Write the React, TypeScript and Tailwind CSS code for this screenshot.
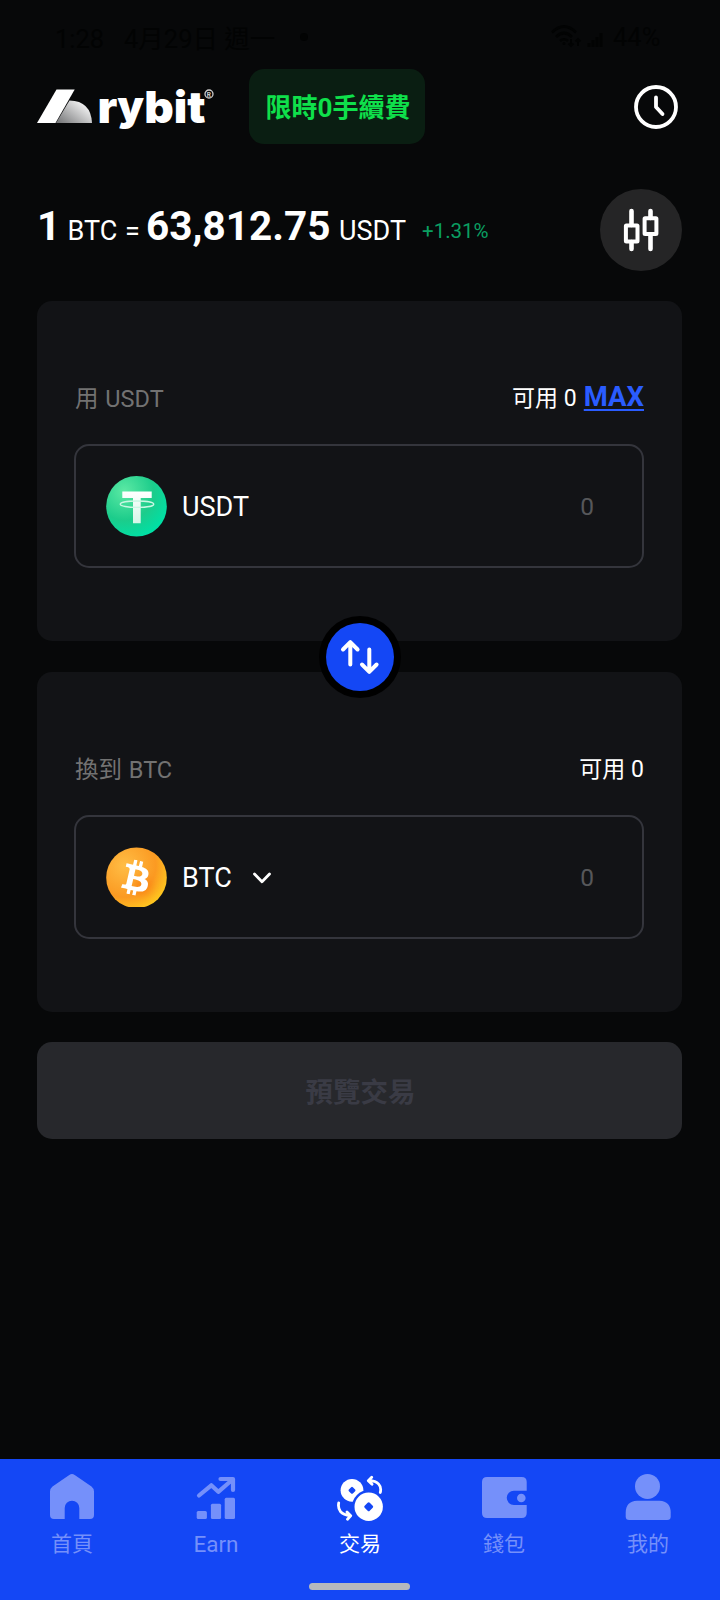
import type { ReactNode } from 'react';
import { FaBtc } from 'react-icons/fa';
import clsx from 'clsx';

interface NavItemProps {
  label: ReactNode;
  active?: boolean;
  children: ReactNode;
}

interface AssetCardProps {
  label: string;
  available: ReactNode;
  icon: ReactNode;
  symbol: ReactNode;
}

function StatusBar() {
  return (
    <div className="flex h-[69px] items-start pt-[23px] pl-[55px] pr-[57px] text-[25.5px] leading-[32px] text-[#020303]">
      <span className="w-[69px]">1:28</span>
      <span className="w-[176px] whitespace-nowrap">4月29日 週一</span>
      <span className="mt-[10px] size-2 rounded-full bg-[#020303]" />
      <div className="ml-auto flex items-start">
        <svg width="58" height="28" viewBox="0 0 58 28" fill="none" stroke="#020303" strokeWidth="2.6">
          <path d="M2 9.5Q14-2.500 26 9.500M6 14Q14 6 22 14M10 18Q14 14.500 18 18" />
          <circle cx="14" cy="20.500" r="1.500" fill="#020303" stroke="none" />
          <path d="M21 16v7M18.500 20.500l2.500 2.500 2.500-2.500M28 23v-7M25.500 18.500L28 16l2.500 2.500" strokeWidth="1.800" />
          <path d="M39 24v-4M43 24v-7M47 24V14M51 24V10" strokeWidth="3" />
        </svg>
        <span className="ml-[5px] -mt-0.5 w-[50px] text-[25.5px]">44%</span>
      </div>
    </div>
  );
}

function Logo() {
  return (
    <svg className="overflow-visible" width="180" height="50" viewBox="0 0 180 50">
      <defs>
        <linearGradient id="logoDome" x1="0" y1="0.9" x2="0.85" y2="0.2">
          <stop offset="0" stopColor="#77787a" />
          <stop offset="1" stopColor="#f4f4f4" />
        </linearGradient>
      </defs>
      <path d="M19 34L32.500 11.500Q54 12 55 34Z" fill="url(#logoDome)" />
      <path d="M0 34L19.500 0.500H37.700L18.500 34Z" fill="#fff" />
      <text
        x="60.500"
        y="33.700"
        textLength="108"
        lengthAdjust="spacingAndGlyphs"
        className="fill-white font-[Inter] text-[44.5px] font-black"
      >
        r
        <tspan dy="-3" className="text-[41px]">
          y
        </tspan>
        <tspan dy="3">bit</tspan>
      </text>
      <circle cx="172" cy="5" r="4" fill="none" stroke="#ccc" strokeWidth="1.300" />
      <text x="169.800" y="7.500" className="fill-[#ccc] text-[6.500px] font-bold">
        R
      </text>
    </svg>
  );
}

function Header() {
  return (
    <header className="flex h-[75px] items-center pl-[37px] pr-[38px]">
      <div className="mt-[15px] w-[212px]">
        <Logo />
      </div>
      <div className="flex h-[75px] w-44 items-center justify-center rounded-[15px] bg-[#0a1e12] pt-0.5 pl-0.5 text-[26px] leading-none font-bold text-[#0fe04b]">
        限時0手續費
      </div>
      <svg
        className="mr-[3px] ml-auto"
        width="46"
        height="46"
        viewBox="0 0 46 46"
        fill="none"
        stroke="#fff"
        strokeWidth="3.800"
        strokeLinecap="round"
        strokeLinejoin="round"
      >
        <circle cx="23" cy="23" r="20" />
        <path d="M23 13.500V23L29.500 30" />
      </svg>
    </header>
  );
}

function RateRow() {
  return (
    <div className="mt-[44px] flex h-[82px] items-center justify-between pl-[37px] pr-[38px]">
      <div className="flex items-baseline text-[27px] leading-[48px] whitespace-nowrap text-white">
        <span className="w-[30.5px] text-[41px] font-bold">1</span>
        <span className="w-[57.5px]">BTC</span>
        <span className="w-[21px]">=</span>
        <span className="w-[193px] text-[40.5px] font-bold">63,812.75</span>
        <span className="w-[83px]">USDT</span>
        <span className="-translate-y-0.5 text-[20.5px] text-[#0a9f62]">+1.31%</span>
      </div>
      <div className="mt-0.5 size-[82px] rounded-full bg-[#252526]">
        <svg width="82" height="82" viewBox="0 0 82 82" fill="none" stroke="#fff" strokeWidth="4">
          <rect x="25.900" y="36.600" width="11.600" height="15.800" rx="0.500" />
          <rect x="44.600" y="29.200" width="11.800" height="15.800" rx="0.500" />
          <path d="M31.500 22v14M31.500 53v7M50.500 22v7M50.500 46v14" strokeLinecap="round" strokeWidth="4.600" />
        </svg>
      </div>
    </div>
  );
}

function TetherIcon() {
  return (
    <svg width="61" height="61" viewBox="0 0 61 61">
      <defs>
        <radialGradient id="tether" cx="0.3" cy="0.25" r="0.8">
          <stop offset="0" stopColor="#5ce9a4" />
          <stop offset="0.6" stopColor="#1ccc8b" />
          <stop offset="1" stopColor="#00e0a5" />
        </radialGradient>
        <linearGradient id="tetherMark" x1="0" y1="0" x2="0" y2="1">
          <stop offset="0" stopColor="#fff" />
          <stop offset="1" stopColor="#d5f6e8" />
        </linearGradient>
      </defs>
      <circle cx="30.500" cy="30.300" r="30.300" fill="url(#tether)" />
      <path d="M16.300 15.500h29.400v6.500H34.700v25.300h-7.700V22H16.300Z" fill="url(#tetherMark)" />
      <ellipse cx="31" cy="28.200" rx="16.700" ry="3.200" fill="none" stroke="#c9f7e3" strokeWidth="1.400" />
    </svg>
  );
}

function BitcoinIcon() {
  return (
    <svg width="61" height="60" viewBox="0 0 61 60">
      <defs>
        <radialGradient id="btc" cx="0.3" cy="0.3" r="0.8">
          <stop offset="0" stopColor="#ffbd45" />
          <stop offset="0.65" stopColor="#fb9a22" />
          <stop offset="1" stopColor="#ffcb1f" />
        </radialGradient>
      </defs>
      <circle cx="30.500" cy="30.700" r="30.300" fill="url(#btc)" />
      <circle cx="37" cy="39" r="9" fill="#f97f10" className="opacity-70 blur-[4px]" />
      <g transform="rotate(13 30.500 30.500)">
        <FaBtc x="13" y="13.500" size={35} color="#fff" />
      </g>
    </svg>
  );
}

function AssetCard({ label, available, icon, symbol }: AssetCardProps) {
  return (
    <section className="h-[340px] rounded-[15px] bg-[#121316] pt-[80px] pr-[38px] pl-[37px]">
      <div className="flex h-9 items-center justify-between text-[23.5px] leading-9">
        <span className="pl-px text-[#727272] [word-spacing:1px]">{label}</span>
        <div className="flex items-center text-[23px] text-white">{available}</div>
      </div>
      <div className="mt-[27px] flex h-[124px] items-center rounded-[15px] border-2 border-[#34353c] pl-[30px] pr-[48px]">
        {icon}
        <div className="mt-px ml-[15px] flex items-center text-[27px] leading-9 text-white">{symbol}</div>
        <span className="mt-0.5 ml-auto text-[24.5px] leading-9 text-[#56575a]">0</span>
      </div>
    </section>
  );
}

function SwapButton() {
  return (
    <button className="absolute top-[315px] left-[282px] size-[82px] rounded-full bg-black p-[7px]">
      <svg
        className="rounded-full bg-[#1447f5]"
        width="68"
        height="68"
        viewBox="-34 -34 68 68"
        fill="none"
        stroke="#fff"
        strokeWidth="4"
        strokeLinecap="round"
        strokeLinejoin="round"
      >
        <path d="M-9.700 7.500V-14.500M-17-7.500l7.300-7.300 7.300 7.300" />
        <path d="M9.300-7.500V14.500M2 7.500l7.300 7.300 7.300-7.300" />
      </svg>
    </button>
  );
}

function NavItem({ label, active = false, children }: NavItemProps) {
  return (
    <div
      className={clsx(
        'flex w-36 flex-col items-center pt-[14px] text-[21px] leading-[28px]',
        active ? 'text-white' : 'text-[#7590fa]',
      )}
    >
      <svg width="48" height="48" viewBox="0 0 48 48" fill="currentColor">
        {children}
      </svg>
      <span className="mt-[9px]">{label}</span>
    </div>
  );
}

function BottomNav() {
  return (
    <nav className="flex h-[141px] flex-col bg-[#1447f5]">
      <div className="flex">
        <NavItem label="首頁">
          <path d="M21.300 1.900Q24 0 26.700 1.900L43.500 13.500Q46 15.500 46 18.500V42Q46 46 42 46H31.300V35A7.300 7.300 0 0 0 16.700 35V46H6Q2 46 2 42V18.500Q2 15.500 4.500 13.500Z" />
        </NavItem>
        <NavItem label={<span className="text-[22.5px]">Earn</span>}>
          <rect x="4.700" y="38" width="10.200" height="8" rx="1.500" />
          <rect x="18.900" y="30.700" width="10.200" height="15.300" rx="1.500" />
          <rect x="32.700" y="24.700" width="10.300" height="21.300" rx="1.500" />
          <path
            d="M7 22.500L19.300 12.300L26.300 18.800L40 7M28.500 6H41V17"
            fill="none"
            stroke="currentColor"
            strokeWidth="4.200"
            strokeLinecap="round"
            strokeLinejoin="round"
          />
          <path d="M34 6h7v7Z" />
        </NavItem>
        <NavItem label="交易" active>
          <circle cx="16" cy="17.300" r="11.400" />
          <rect x="13.200" y="14.500" width="5.600" height="5.600" rx="1.200" transform="rotate(45 16 17.300)" fill="#1447f5" />
          <circle cx="32.700" cy="33.700" r="16.600" fill="#1447f5" />
          <circle cx="32.700" cy="33.700" r="14.200" />
          <rect x="29.100" y="30.100" width="7.200" height="7.200" rx="1.500" transform="rotate(45 32.700 33.700)" fill="#1447f5" />
          <path
            d="M44.300 19.500C46 12.500 42 8 33 7.700M35.700 4.200L32.300 7.700L36 11.200M2.700 30C1.500 37 5 42 14 42.500M11 39L14.700 42.700L11.500 46.200"
            fill="none"
            stroke="currentColor"
            strokeWidth="2.800"
            strokeLinecap="round"
            strokeLinejoin="round"
          />
        </NavItem>
        <NavItem label="錢包">
          <path d="M7 4H41.700Q46.700 4 46.700 9V17.700H33.900A7.150 7.150 0 0 0 33.900 32H46.700V40Q46.700 45 41.700 45H7Q2 45 2 40V9Q2 4 7 4Z" />
          <circle cx="41.300" cy="25" r="4.300" />
        </NavItem>
        <NavItem label="我的">
          <circle cx="23.500" cy="13.400" r="12.500" />
          <path d="M13 27.700H35.500Q46.700 28.500 46.700 39.500V43.500Q46.700 47 43.200 47H5.200Q1.700 47 1.700 43.500V39.500Q1.700 28.500 13 27.700Z" />
        </NavItem>
      </div>
      <div className="mt-6 ml-[309px] h-[7px] w-[101px] rounded-full bg-[#b6b9bd]" />
    </nav>
  );
}

export default function App() {
  return (
    <div className="flex h-[1600px] w-[720px] flex-col bg-[#070809] font-[Roboto,'Noto_Sans_CJK_TC',sans-serif]">
      <StatusBar />
      <Header />
      <RateRow />
      <main className="mt-[31px] flex flex-1 flex-col pl-[37px] pr-[38px]">
        <div className="relative flex flex-col gap-[31px]">
          <AssetCard
            label="用 USDT"
            available={
              <>
                可用 0
                <span className="ml-[7px] pb-[5px] text-[27.5px] font-bold text-[#2a5cff] underline decoration-2 underline-offset-[3px]">
                  MAX
                </span>
              </>
            }
            icon={<TetherIcon />}
            symbol="USDT"
          />
          <AssetCard
            label="換到 BTC"
            available="可用 0"
            icon={<BitcoinIcon />}
            symbol={
              <>
                BTC
                <svg className="ml-[21px]" width="18" height="12" viewBox="0 0 18 12" fill="none" stroke="#fff" strokeWidth="2.800">
                  <path d="M1.500 2L9 9.700L16.500 2" strokeLinecap="round" strokeLinejoin="round" />
                </svg>
              </>
            }
          />
          <SwapButton />
        </div>
        <button
          disabled
          className="mt-[30px] h-[97px] rounded-[15px] bg-[#27282c] pt-1 pl-0.5 text-[27.5px] leading-none font-bold text-[#3a3b45]"
        >
          預覽交易
        </button>
      </main>
      <BottomNav />
    </div>
  );
}
